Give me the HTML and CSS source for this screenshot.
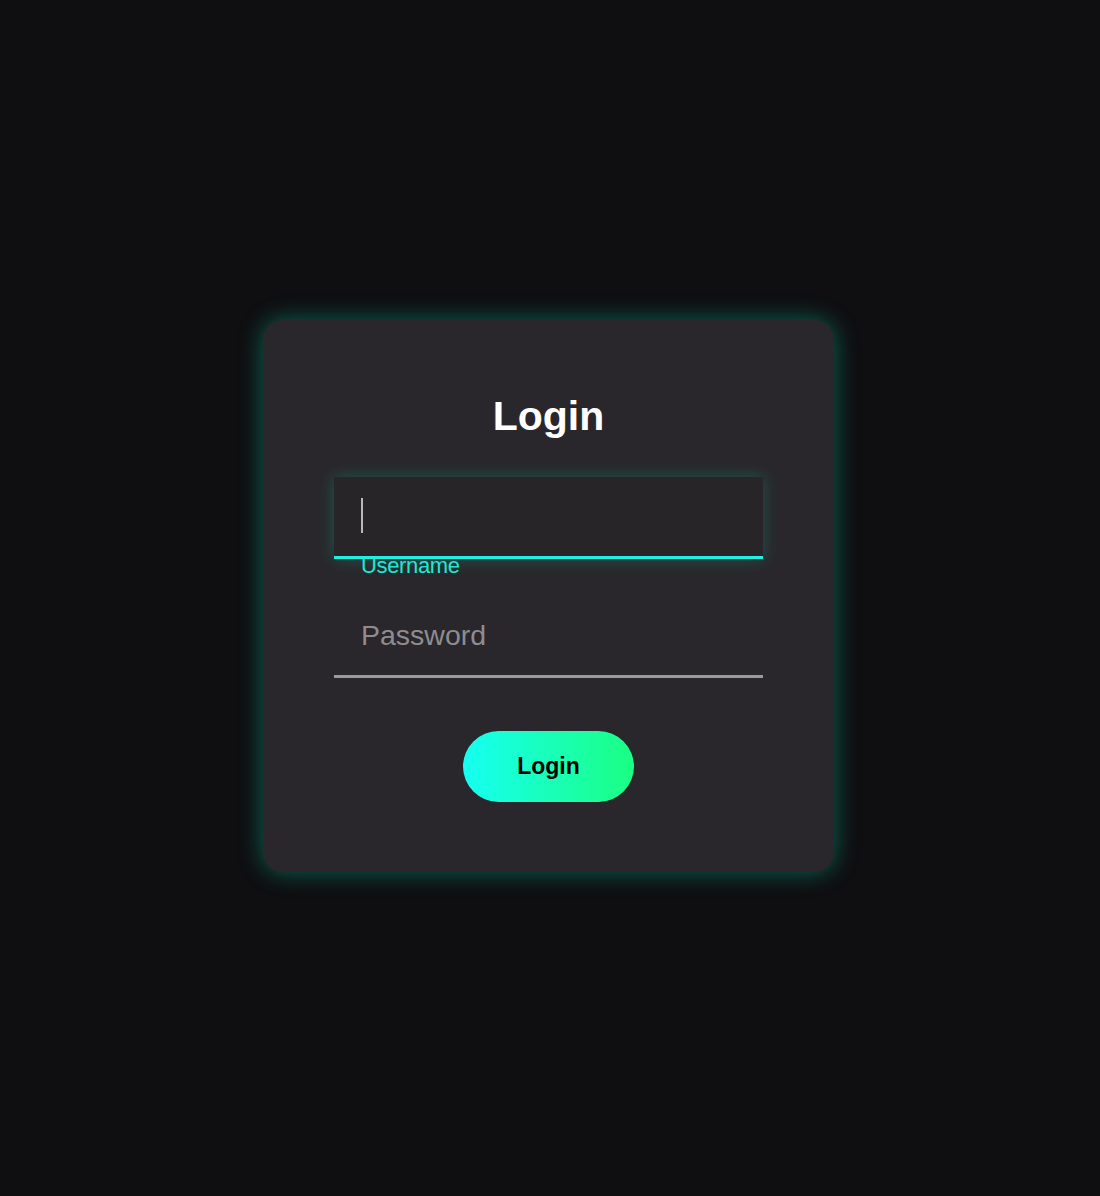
FILE: index.html
```html
<!DOCTYPE html>
<html lang="en">
<head>
<meta charset="utf-8">
<title>Login</title>
<link rel="stylesheet" href="styles.css">
</head>
<body>
  <form class="card">
    <h2 class="title">Login</h2>
    <div class="field">
      <input class="input input-active" type="text" aria-label="Username">
      <span class="caret"></span>
      <label class="float-label">Username</label>
    </div>
    <div class="field field-last">
      <input class="input" type="password" placeholder="Password">
    </div>
    <button class="btn" type="button">Login</button>
  </form>
</body>
</html>
```
FILE: styles.css
```css
html, body {
  margin: 0;
  padding: 0;
}
body {
  background: #0f0e11;
  min-height: 100vh;
  display: flex;
  align-items: center;
  justify-content: center;
  font-family: "Liberation Sans", Arial, sans-serif;
}
.card {
  width: 429px;
  padding: 73px 71px 70px;
  background: #29272b;
  border-radius: 20px;
  box-shadow: 0 0 24px rgba(0, 255, 200, 0.36);
  margin-left: -3px;
  margin-top: -4px;
}
.title {
  margin: 0 0 38px;
  font-size: 41px;
  line-height: 46px;
  font-weight: bold;
  color: #ffffff;
  text-align: center;
}
.field {
  position: relative;
  margin-bottom: 37px;
}
.field-last {
  margin-bottom: 53px;
}
.input {
  display: block;
  width: 100%;
  box-sizing: border-box;
  height: 82px;
  padding: 0 27px;
  background: transparent;
  border: none;
  border-bottom: 3px solid #9a9a9a;
  font-family: "Liberation Sans", Arial, sans-serif;
  font-size: 28.5px;
  color: #ffffff;
  outline: none;
  border-radius: 0;
}
.input::placeholder {
  color: #8e8c90;
}
.input-active {
  background: #272528;
  border-bottom-color: #1cf2e2;
  box-shadow: 0 0 16px rgba(0, 255, 200, 0.22);
}
.caret {
  position: absolute;
  left: 27px;
  top: 21px;
  width: 2px;
  height: 35px;
  background: #b9b9b9;
}
.float-label {
  position: absolute;
  left: 27px;
  top: 77px;
  font-size: 22px;
  line-height: 24px;
  color: #1de8d6;
  letter-spacing: -0.35px;
}
.btn {
  display: block;
  margin: 0 auto;
  width: 171px;
  height: 71px;
  border: none;
  border-radius: 36px;
  background: linear-gradient(90deg, #16fff2 0%, #1bff82 100%);
  color: #000000;
  font-family: "Liberation Sans", Arial, sans-serif;
  font-size: 23px;
  font-weight: bold;
  cursor: pointer;
}
```
